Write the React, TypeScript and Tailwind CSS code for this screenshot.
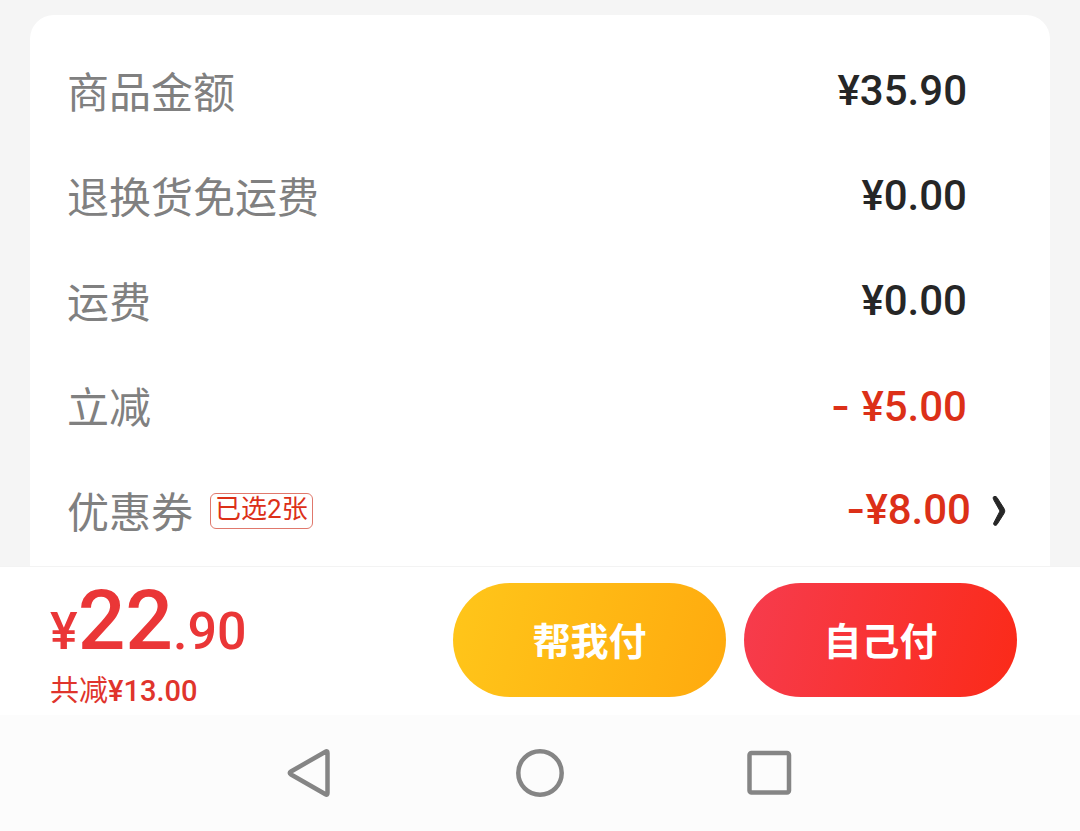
import React from 'react';

type Row = {
  label: string;
  amount: string;
  discount?: boolean;
};

const rows: Row[] = [
  { label: '商品金额', amount: '¥35.90' },
  { label: '退换货免运费', amount: '¥0.00' },
  { label: '运费', amount: '¥0.00' },
  { label: '立减', amount: '¥5.00', discount: true },
];

const PriceRow = ({ label, amount, discount }: Row) => (
  <div className="flex h-[105px] items-center justify-between pr-[46px]">
    <dt className="pt-1.5 text-[#808080]">{label}</dt>
    <dd className={discount ? 'font-medium text-[#dc3018]' : 'font-medium text-[#262626]'}>
      {discount && <span className="whitespace-pre font-['Inter',sans-serif]">{'- '}</span>}
      {amount}
    </dd>
  </div>
);

const CouponRow = () => (
  <div className="flex h-[105px] items-center justify-between pr-1.5">
    <dt className="flex items-center gap-[17px] text-[#808080]">
      <span className="pt-1.5">优惠券</span>
      <span className="rounded-md border border-[#e0786c] px-1 pb-1 text-[26px] leading-[30px] text-[#dc3018]">已选2张</span>
    </dt>
    <dd className="pb-1">
      <button className="flex items-center gap-5 font-medium text-[#dc3018]">
        <span>
          <span className="font-['Inter',sans-serif]">-</span>
          ¥8.00
        </span>
        <svg className="mt-1 h-8 w-4" viewBox="0 0 16 32" fill="#262626" stroke="#262626" strokeWidth="1" strokeLinejoin="round">
          <path d="M2 2.500 C3 1 5 1 6 2.500 L13 13.500 C14 15.200 14 16.800 13 18.500 L6 29.500 C5 31 2.500 30.500 2.500 28.500 L9 16 L2.500 4.500 Z" />
        </svg>
      </button>
    </dd>
  </div>
);

const PayBar = () => (
  <div className="flex h-[149px] items-start justify-between border-t border-[#f3f3f3] bg-white pr-[63px] pl-[50px] pt-4">
    <div className="text-[#ea3637]">
      <div className="flex items-baseline pt-0.5 font-medium">
        <span className="text-[52px] leading-[72px]">¥</span>
        <span className="text-[84px] leading-[72px]">22</span>
        <span className="text-[52px] leading-[72px]">.90</span>
      </div>
      <div className="pt-1 text-[29px] leading-[38px] text-[#e0342c]">
        共减<span className="font-medium">¥13.00</span>
      </div>
    </div>
    <div className="flex gap-[18px]">
      <button className="h-[114px] w-[273px] rounded-full bg-linear-[105deg] from-[#ffc61a] to-[#ffaa0e] pt-1 text-[38px] font-bold text-white">
        帮我付
      </button>
      <button className="h-[114px] w-[273px] rounded-full bg-linear-[105deg] from-[#f63c4e] to-[#fb2a18] pt-1 text-[38px] font-bold text-white">
        自己付
      </button>
    </div>
  </div>
);

const SystemNav = () => (
  <nav className="flex h-[116px] items-center justify-center gap-[182px] bg-[#fcfcfc]">
    <button aria-label="返回">
      <svg className="size-12" viewBox="0 0 48 48" fill="none" stroke="#858585" strokeWidth="4.5" strokeLinejoin="round">
        <path d="M39.500 2.700 Q41.500 1.500 41.500 4 V44 Q41.500 46.500 39.500 45.300 L5 25.500 Q2.500 24 5 22.500 Z" />
      </svg>
    </button>
    <button aria-label="主页">
      <svg className="size-12" viewBox="0 0 48 48" fill="none" stroke="#858585" strokeWidth="4.5">
        <circle cx="24" cy="24" r="21.700" />
      </svg>
    </button>
    <button aria-label="最近任务">
      <svg className="size-12" viewBox="0 0 48 48" fill="none" stroke="#858585" strokeWidth="4.5" strokeLinejoin="round">
        <rect x="3.500" y="4" width="39.500" height="39.500" rx="2" />
      </svg>
    </button>
  </nav>
);

const App = () => (
  <div className="bg-[#f5f5f5] font-['Roboto','Noto_Sans_CJK_SC',sans-serif]">
    <main className="px-[30px] pt-[15px]">
      <dl className="rounded-t-3xl bg-white px-[37px] pt-[23px] pb-[3px] text-[42px]">
        {rows.map((row) => (
          <PriceRow key={row.label} {...row} />
        ))}
        <CouponRow />
      </dl>
    </main>
    <PayBar />
    <SystemNav />
  </div>
);

export default App;
